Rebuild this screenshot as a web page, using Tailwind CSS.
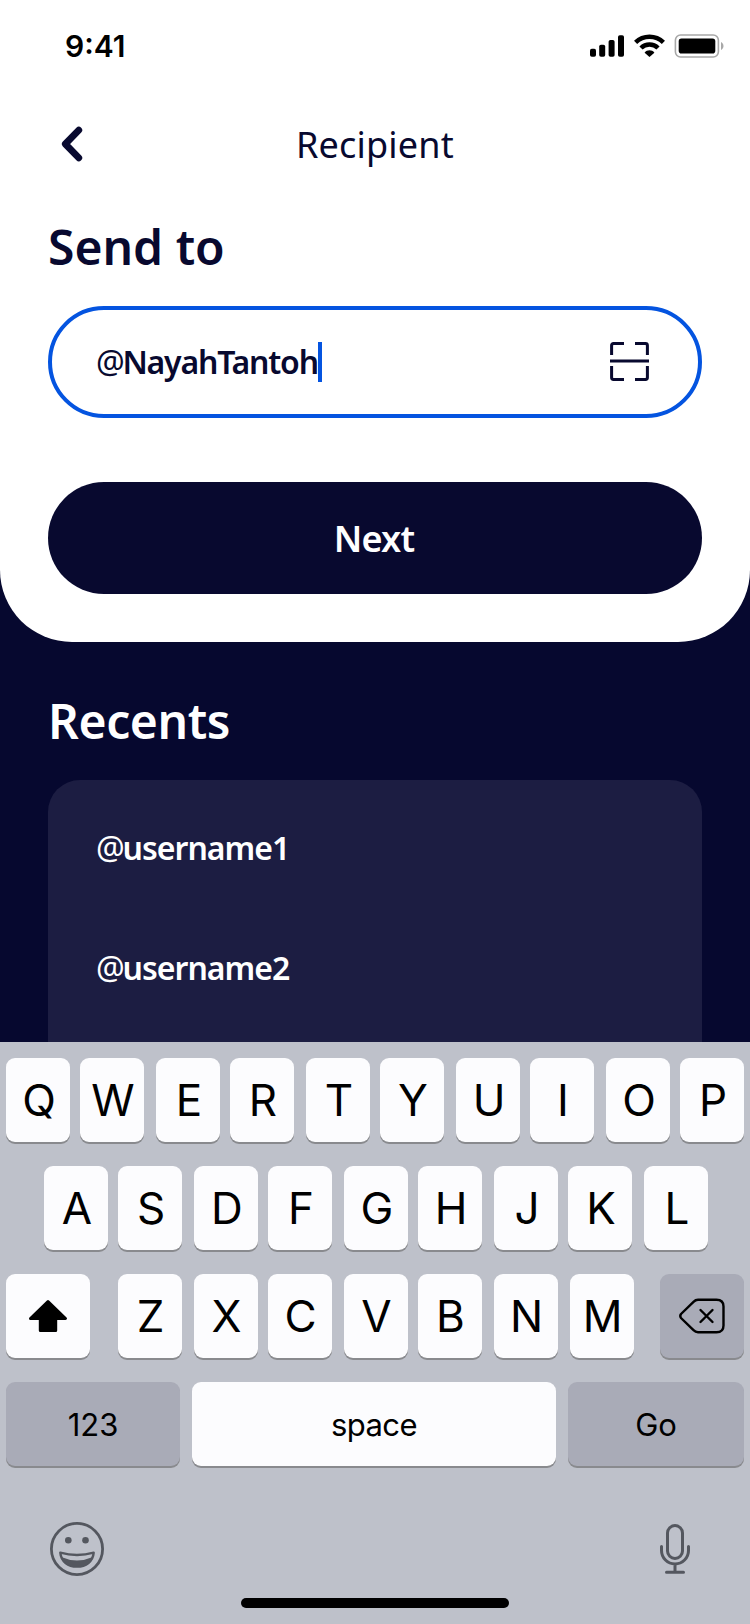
<!DOCTYPE html>
<html lang="en">
<head>
<meta charset="utf-8">
<meta name="viewport" content="width=device-width, initial-scale=1">
<title>Recipient</title>
<script src="https://cdn.jsdelivr.net/npm/@tailwindcss/browser@4"></script>
</head>
<body class="bg-[#06082f]">
<div class="flex h-[1624px] w-[750px] flex-col overflow-hidden bg-[#06082f] font-['Noto_Sans',sans-serif] text-[#08092f]">

  <section class="shrink-0 rounded-b-[72px] bg-white pb-12">
    <!-- Status bar -->
    <div class="flex h-[88px] items-start justify-between pr-[26px] pl-[65px]">
      <div class="mt-[31px] font-['Inter',sans-serif] text-[30px] leading-[31px] font-semibold text-black">9:41</div>
      <svg class="mt-[30px]" width="136" height="32" viewBox="588 30 136 32" fill="none">
        <g fill="#000">
          <rect x="590" y="48.8" width="6" height="8" rx="1.8"/>
          <rect x="599.2" y="44.8" width="6" height="12" rx="1.8"/>
          <rect x="608.6" y="40" width="6" height="16.8" rx="1.8"/>
          <rect x="618" y="35.3" width="6" height="21.5" rx="1.8"/>
          <path d="M644.6 52.7C647 49.5 652 49.5 654.4 52.7L649.5 57Z"/>
          <rect x="678.7" y="38.6" width="36.6" height="15" rx="2.8"/>
        </g>
        <path d="M635.6 42.4A19.8 19.8 0 0 1 663.4 42.4M641 48A12 12 0 0 1 658 48" stroke="#000" stroke-width="4.5"/>
        <rect x="675.4" y="35" width="43" height="22" rx="5.2" stroke="#a8a8a8" stroke-width="1.6"/>
        <path d="M721 42v8c3.3-1.4 3.3-6.600 0-8Z" fill="#a8a8a8"/>
      </svg>
    </div>

    <!-- Navigation -->
    <header class="grid h-28 grid-cols-[96px_1fr_96px] items-center">
      <button aria-label="Back" class="pl-[58px]">
        <svg width="28" height="40" viewBox="0 0 28 40" fill="none" stroke="#08092f" stroke-width="6.800" stroke-linecap="round" stroke-linejoin="round"><path d="M20.800 6.200 7.300 20 20.800 33.800"/></svg>
      </button>
      <h1 class="pt-0.5 text-center text-[36px] leading-none font-normal tracking-[0.2px]">Recipient</h1>
    </header>

    <div class="px-12 pt-[17px]">
      <h2 class="text-[48px] leading-[60px] font-semibold">Send to</h2>
      <div class="mt-[29px] flex h-28 items-center rounded-full border-4 border-[#0454e0] pr-12 pl-[44px]">
        <span class="text-[32px] leading-none font-semibold tracking-[-1.2px]"><span class="font-normal tracking-[-2.4px]">@</span>NayahTantoh</span>
        <span class="h-10 w-1 bg-[#0454e0]"></span>
        <svg class="ml-auto" width="40" height="40" viewBox="0 0 40 40" fill="none" stroke="#08092f" stroke-width="3">
          <path d="M1.600 13V3.500Q1.600 1.600 3.500 1.600H14M25 1.600H35.500Q37.400 1.600 37.400 3.500V13M1.600 24V35.500Q1.600 37.400 3.500 37.400H14M25 37.400H35.500Q37.400 37.400 37.400 35.500V24"/>
          <path d="M0 19H39"/>
        </svg>
      </div>
      <button class="mt-16 flex h-28 w-full items-center justify-center rounded-full bg-[#08092f] pt-0.5 pr-0.5 text-[36px] leading-none font-semibold tracking-[-0.8px] text-white">Next</button>
    </div>
  </section>

  <!-- Recent recipients -->
  <section class="flex h-[400px] shrink-0 flex-col px-12 pt-[49px] text-white">
    <h2 class="text-[48px] leading-[60px] font-semibold tracking-[-0.4px]">Recents</h2>
    <ul class="mt-[29px] grow rounded-t-[32px] bg-[#1c1d42] px-12 pt-2 text-[32px] font-semibold tracking-[-1px]">
      <li class="flex h-[120px] items-center"><span class="font-normal tracking-[-2.2px]">@</span>username1</li>
      <li class="flex h-[120px] items-center"><span class="font-normal tracking-[-2.2px]">@</span>username2</li>
    </ul>
  </section>

  <!-- Keyboard -->
  <section class="flex grow flex-col gap-6 bg-[#bec1ca] px-1.5 pt-4 font-['Inter',sans-serif] text-[44px] leading-none text-black [&_button]:flex [&_button]:h-[84px] [&_button]:w-16 [&_button]:shrink-0 [&_button]:items-center [&_button]:justify-center [&_button]:rounded-[9px] [&_button]:bg-[#fcfcfe] [&_button]:shadow-[0_2px_0_#898a8e]">
    <div class="flex [&>button]:pl-0.5 [&>button:nth-child(even)]:mr-3 [&>button:nth-child(odd)]:mr-2.5">
      <button>Q</button><button>W</button><button>E</button><button>R</button><button>T</button><button>Y</button><button>U</button><button>I</button><button>O</button><button>P</button>
    </div>
    <div class="flex pl-[38px] [&>button]:pl-0.5 [&>button:nth-child(even)]:mr-3 [&>button:nth-child(odd)]:mr-2.5">
      <button>A</button><button>S</button><button>D</button><button>F</button><button>G</button><button>H</button><button>J</button><button>K</button><button>L</button>
    </div>
    <div class="flex">
      <button aria-label="Shift" class="mr-7 w-[84px]!">
        <svg width="40" height="36" viewBox="0 0 40 36" fill="#000" stroke="#000" stroke-width="3" stroke-linejoin="round"><path d="M20 3.600 37.500 20.500H27.700V32.500H12.300V20.500H2.500Z"/></svg>
      </button>
      <div class="flex [&>button]:pl-px [&>button:nth-child(even)]:mr-2.5 [&>button:nth-child(odd)]:mr-3">
        <button>Z</button><button>X</button><button>C</button><button>V</button><button>B</button><button class="mr-3!">N</button><button>M</button>
      </div>
      <button aria-label="Delete" class="ml-3.5 w-[84px]! bg-[#a9abb7]!">
        <svg width="48" height="36" viewBox="0 0 48 36" fill="none" stroke="#000" stroke-width="2.400" stroke-linecap="round" stroke-linejoin="round"><path d="M20 1.800H38.500Q45.500 1.800 45.500 8.500V27.500Q45.500 34.200 38.500 34.200H20Q17.500 34.200 15.500 32.200L3 20Q1.500 18 3 16L15.500 3.800Q17.500 1.800 20 1.800ZM22.500 12 34.500 24M34.500 12 22.500 24"/></svg>
      </button>
    </div>
    <div class="flex justify-between text-[31px]">
      <button class="w-[174px]! bg-[#a9abb7]!">123</button>
      <button class="w-[364px]! tracking-[-0.6px]">space</button>
      <button class="w-[176px]! bg-[#a9abb7]!">Go</button>
    </div>
    <div class="mt-[30px] flex h-[58px] items-center justify-between pr-[53px] pl-[42px]">
      <svg width="58" height="58" viewBox="0 0 58 58" fill="none" stroke="#54575f" stroke-width="2.800">
        <circle cx="29" cy="29" r="25.600"/>
        <circle cx="20.300" cy="20.300" r="3.300" fill="#54575f" stroke="none"/>
        <circle cx="37.500" cy="20.300" r="3.300" fill="#54575f" stroke="none"/>
        <path d="M12.300 32.700Q29 37.300 45.700 32.700C45 41.500 38 46.600 29 46.600S13 41.500 12.300 32.700Z" stroke-width="2.400" stroke-linejoin="round"/>
        <path d="M13.200 37Q29 44 44.800 37C41.500 44 35.500 47 29 47S16.500 44 13.200 37Z" fill="#54575f" stroke="none"/>
      </svg>
      <svg width="32" height="52" viewBox="0 0 32 52" fill="none" stroke="#54575f" stroke-width="3" stroke-linecap="round">
        <rect x="8.500" y="2.500" width="15" height="33" rx="7.500"/>
        <path d="M2.500 23.500V27.500A13.500 13.500 0 0 0 29.500 27.500V23.500M16 41V49M7.500 49.300H24.500"/>
      </svg>
    </div>
    <div class="mt-[-4px] h-2.5 w-[268px] self-center rounded-full bg-black"></div>
  </section>
</div>
</body>
</html>
